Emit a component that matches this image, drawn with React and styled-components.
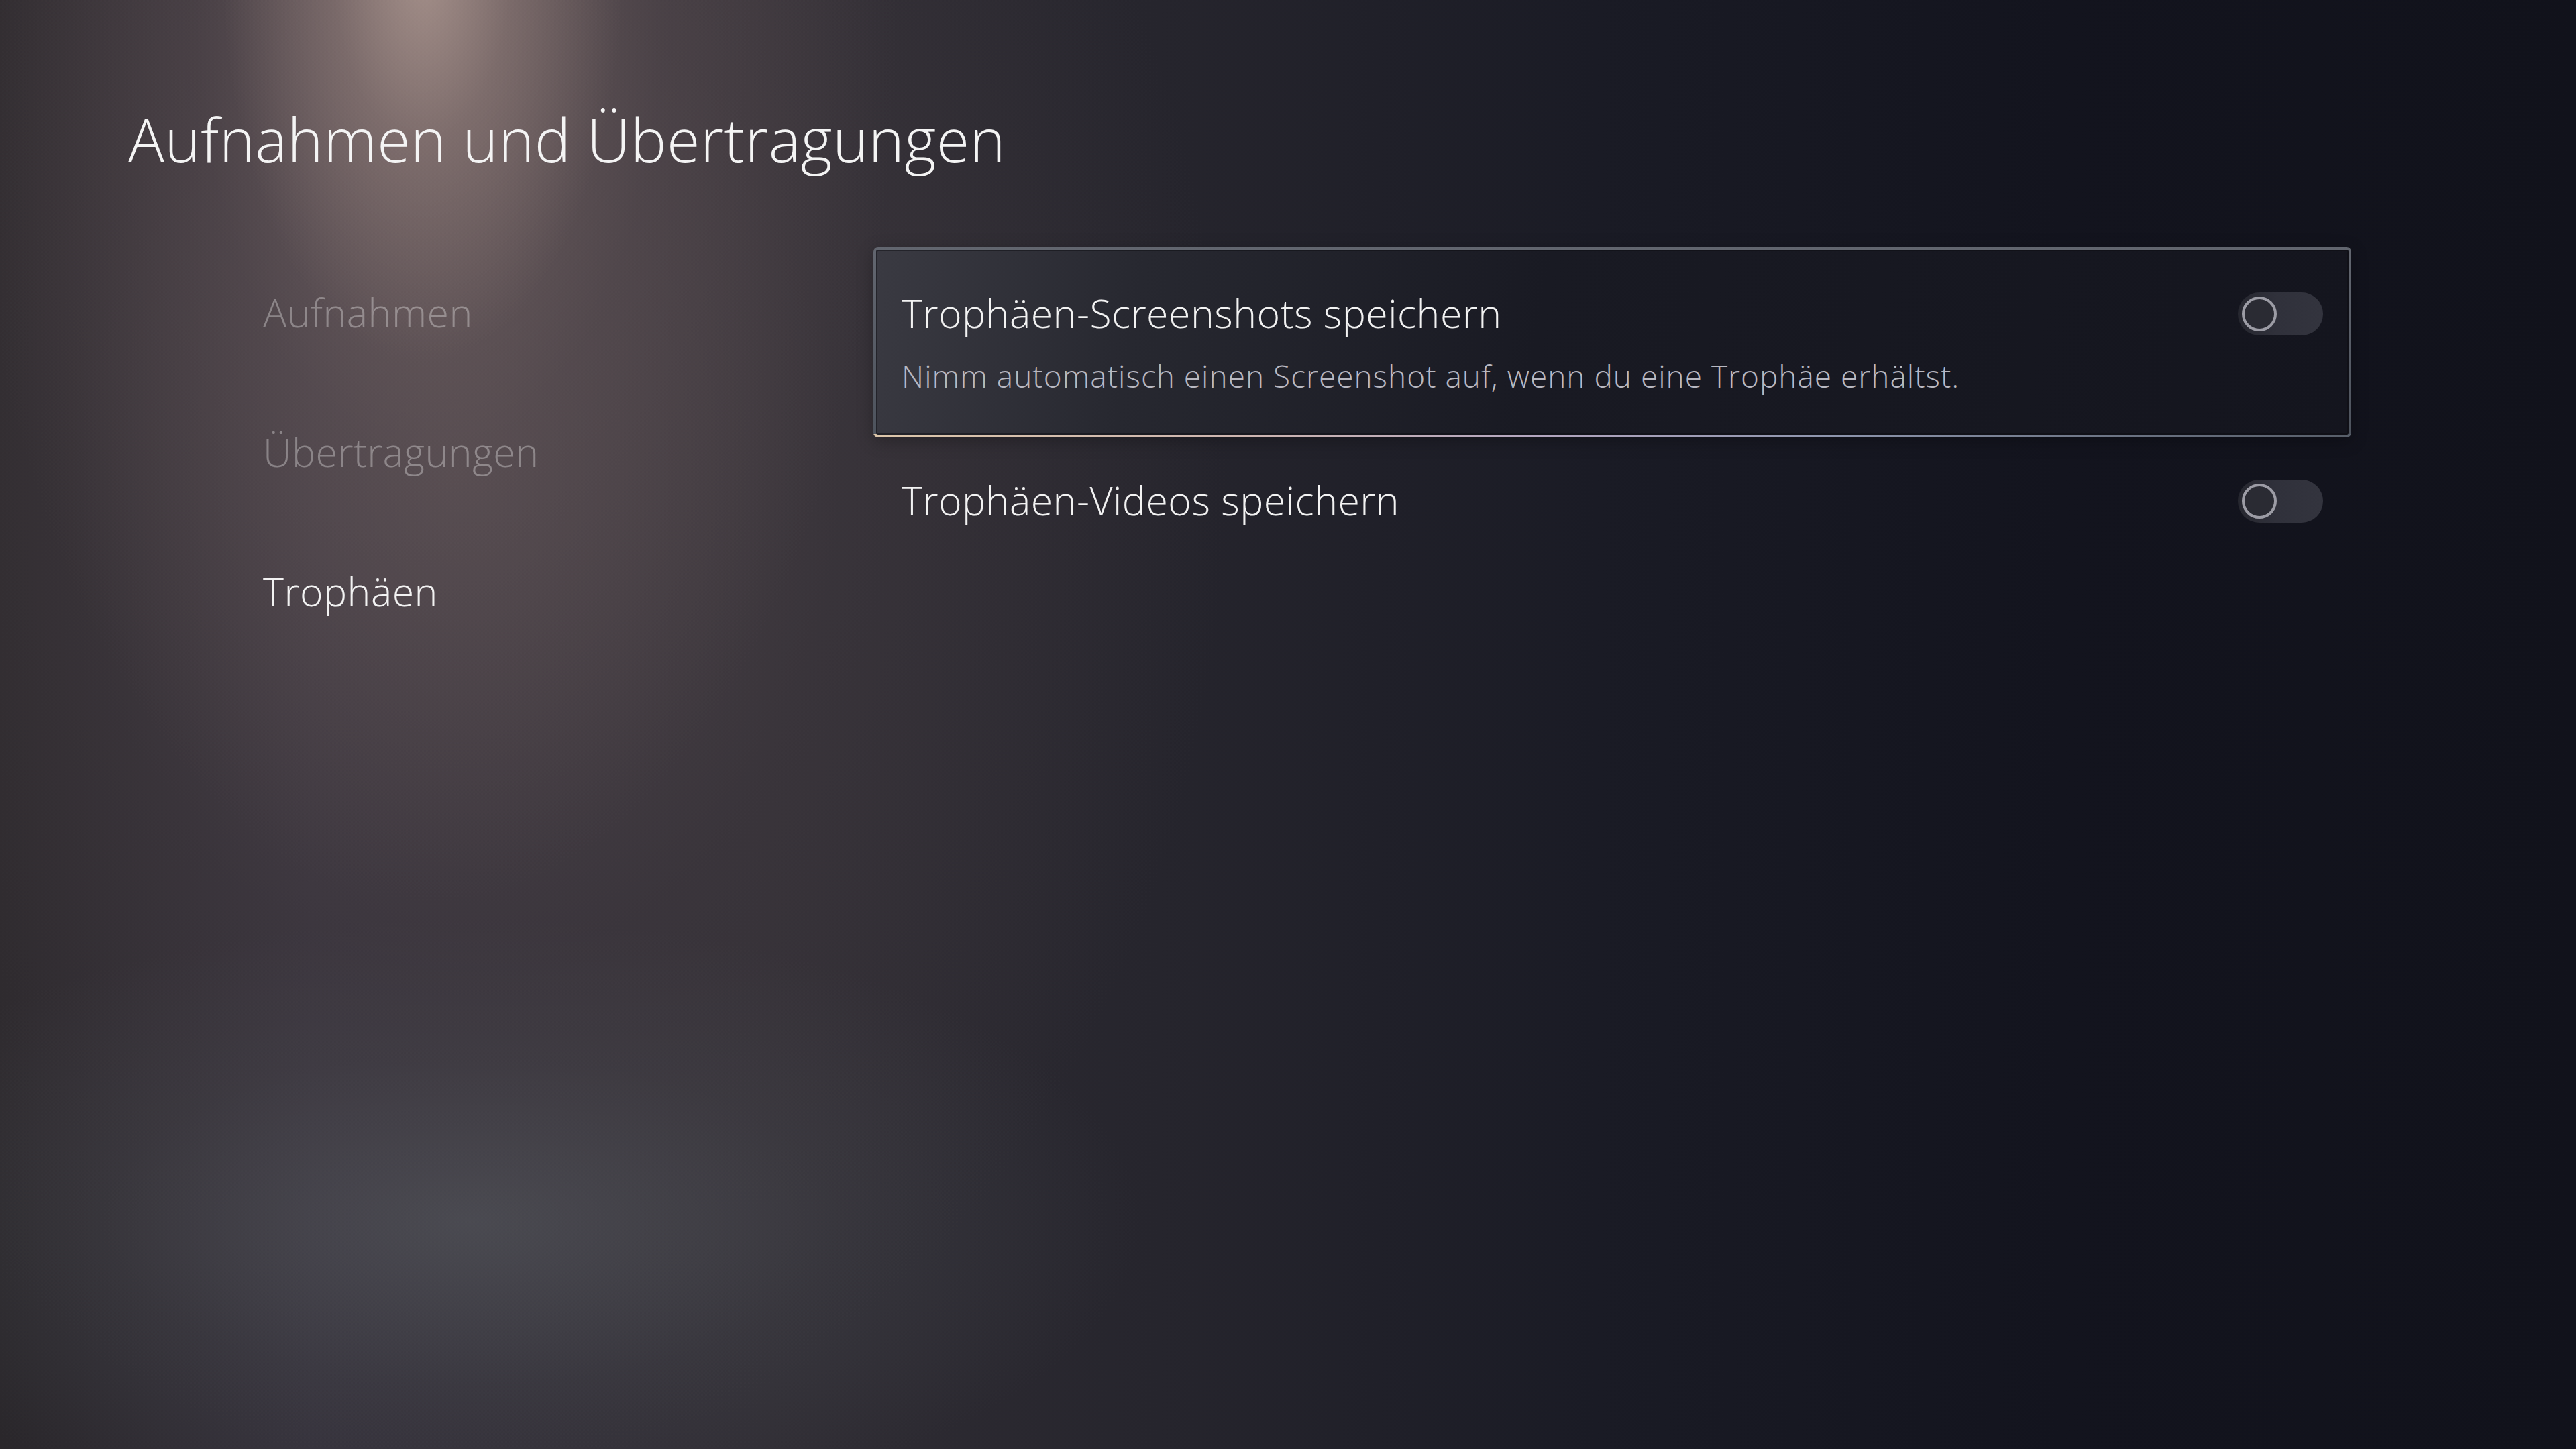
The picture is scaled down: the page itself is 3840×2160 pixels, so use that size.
import React from "react";
import styled, { createGlobalStyle } from "styled-components";

const Global = createGlobalStyle`
  html, body { margin: 0; padding: 0; background: #12131c; }
  * { box-sizing: border-box; }
`;

const Page = styled.div`
  width: 3840px;
  height: 2160px;
  overflow: hidden;
  padding: 162px 0 0 191px;
  font-family: "Open Sans", "Noto Sans", sans-serif;
  font-weight: 300;
  color: #f2f2f2;
  background:
    radial-gradient(ellipse 300px 600px at 630px -60px, rgba(200, 176, 166, 0.6) 0%, rgba(185, 160, 152, 0.28) 45%, rgba(0,0,0,0) 100%),
    radial-gradient(ellipse 700px 1350px at 640px 0px, rgba(160, 136, 130, 0.5) 0%, rgba(130, 110, 110, 0.22) 50%, rgba(0,0,0,0) 100%),
    radial-gradient(ellipse 1150px 1500px at 680px 700px, rgba(100, 88, 90, 0.55) 0%, rgba(80, 70, 74, 0.3) 50%, rgba(0,0,0,0) 100%),
    radial-gradient(ellipse 1000px 450px at 700px 1820px, rgba(92, 98, 104, 0.55) 0%, rgba(78, 82, 88, 0.25) 55%, rgba(0,0,0,0) 100%),
    linear-gradient(90deg, #2a272b 0%, #34303a 12%, #302d34 30%, #26252d 45%, #1a1b25 62%, #13141e 80%, #11121b 100%);
`;

const Title = styled.h1`
  margin: 0;
  font-size: 90px;
  font-weight: 300;
  line-height: 90px;
  letter-spacing: 0.5px;
  color: #f4f4f4;
  white-space: nowrap;
`;

const Body = styled.div`
  display: flex;
  align-items: flex-start;
  margin-top: 116px;
`;

const Nav = styled.nav`
  width: 1111px;
  flex: none;
  padding: 62px 0 0 201px;
  display: flex;
  flex-direction: column;
  gap: 137px;
`;

const NavItem = styled.div`
  font-size: 59px;
  line-height: 71px;
  letter-spacing: 0.5px;
  color: ${(p) => (p.$active ? "#f2f2f2" : "rgba(255,255,255,0.33)")};
  white-space: nowrap;
`;

const List = styled.div`
  width: 2203px;
  flex: none;
  display: flex;
  flex-direction: column;
`;

const Row = styled.div`
  display: flex;
  justify-content: space-between;
  align-items: flex-start;
  padding: ${(p) => (p.$focused ? "59px" : "54px")} 38px 60px 38px;
  border: 4px solid transparent;
  border-radius: 7px;
  ${(p) =>
    p.$focused &&
    `
    background:
      linear-gradient(100deg, #3a3a42 0%, #272830 18%, #191a23 45%, #14151e 100%) padding-box,
      linear-gradient(90deg, #dcc6aa 0%, #cdb5b0 25%, #b3a6c0 45%, #8d95ad 65%, #6a7282 85%, #575e69 100%) bottom / 100% 5px no-repeat border-box,
      linear-gradient(180deg, #62666f 0%, #4d535d 100%) border-box;
    box-shadow: inset 0 0 0 2px rgba(10, 10, 16, 0.45), 0 6px 24px rgba(0,0,0,0.25);
  `}
`;

const TextCol = styled.div`
  display: flex;
  flex-direction: column;
  gap: 31px;
`;

const RowTitle = styled.div`
  font-size: 59px;
  line-height: 71px;
  letter-spacing: 0.5px;
  color: #f2f2f2;
  white-space: nowrap;
`;

const RowDesc = styled.div`
  font-size: 46px;
  line-height: 55px;
  letter-spacing: 1px;
  color: #b8b8c1;
  white-space: nowrap;
`;

const Toggle = styled.div`
  flex: none;
  width: 127px;
  height: 64px;
  margin-top: 5px;
  border-radius: 32px;
  background: linear-gradient(90deg, #26272f 0%, #30313b 45%, #33343e 100%);
  display: flex;
  align-items: center;
  padding: 0 6px;
`;

const Knob = styled.div`
  width: 52px;
  height: 52px;
  border-radius: 50%;
  border: 4px solid #9c9ca5;
  background: #2a2b33;
`;

const rows = [
  {
    title: "Trophäen-Screenshots speichern",
    desc: "Nimm automatisch einen Screenshot auf, wenn du eine Trophäe erhältst.",
    focused: true,
  },
  { title: "Trophäen-Videos speichern" },
];

export default function App() {
  return (
    <>
      <Global />
      <Page>
        <Title>Aufnahmen und Übertragungen</Title>
        <Body>
          <Nav>
            <NavItem>Aufnahmen</NavItem>
            <NavItem>Übertragungen</NavItem>
            <NavItem $active>Trophäen</NavItem>
          </Nav>
          <List>
            {rows.map((r) => (
              <Row key={r.title} $focused={r.focused}>
                <TextCol>
                  <RowTitle>{r.title}</RowTitle>
                  {r.desc && <RowDesc>{r.desc}</RowDesc>}
                </TextCol>
                <Toggle>
                  <Knob />
                </Toggle>
              </Row>
            ))}
          </List>
        </Body>
      </Page>
    </>
  );
}
